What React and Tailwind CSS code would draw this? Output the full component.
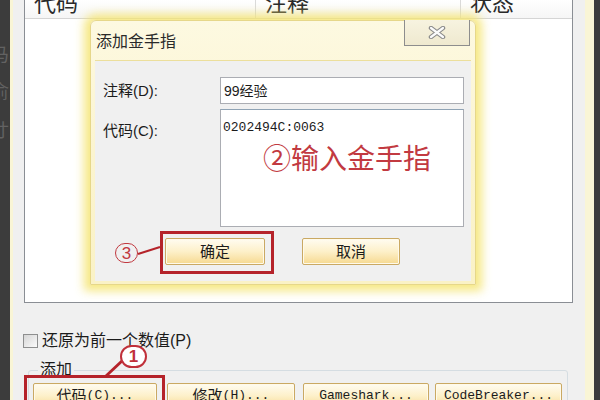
import React from 'react';

const font = "font-['Liberation_Sans','Noto_Sans_CJK_SC',sans-serif]";

function WinButton({ className = '', children }) {
  return (
    <div
      className={
        'flex items-center justify-center rounded-[2px] border border-[#caa963] bg-gradient-to-b from-[#fffcf1] via-[#fdf0c9] to-[#f6d98f] shadow-[inset_0_0_0_1px_#fffaea] text-[#1b1b1b] ' +
        className
      }
    >
      {children}
    </div>
  );
}

function Mono({ children }) {
  return <span className="font-['Liberation_Mono',monospace] text-[13px]">{children}</span>;
}

function CloseGlyph() {
  return (
    <svg width="18" height="13" viewBox="0 0 18 13">
      <path d="M3 2 L15 11 M15 2 L3 11" stroke="#8a8a8a" strokeWidth="4.5" strokeLinecap="round" fill="none" />
      <path d="M3 2 L15 11 M15 2 L3 11" stroke="#fbfbfb" strokeWidth="2.2" strokeLinecap="round" fill="none" />
    </svg>
  );
}

function AddCheatDialog() {
  return (
    <div className="absolute left-[65px] top-[20px] w-[386px] h-[265px] rounded-t-[6px] border border-[#e6d78a] bg-gradient-to-b from-[#fdf9e1] via-[#fbf4d0] to-[#faf2c6] shadow-[0_0_10px_6px_rgba(244,228,112,0.85)] flex flex-col">
      {/* title bar */}
      <div className="h-[39px] flex justify-between pl-[5px] pr-[5px]">
        <span className="self-center text-[16px] leading-[18px] text-[#2a2a2a] mt-[2px]">添加金手指</span>
        <div className="self-start w-[66px] h-[26px] -mt-px border border-t-0 border-[#8d8d8d] bg-gradient-to-b from-[#f7f3e0] to-[#efe9cf] flex items-center justify-center">
          <CloseGlyph />
        </div>
      </div>

      {/* client area */}
      <div className="relative mx-[4px] h-[221px] bg-[#f0f0f0] border-t border-[#ecdf9c] text-[#1b1b1b]">
        <div className="flex items-center mt-[16px]">
          <span className="w-[125px] pl-[8px] text-[15px] leading-[16px]">注释(D):</span>
          <div className="w-[244px] h-[27px] border border-[#abadb3] bg-white flex items-center pl-[3px] text-[14px] leading-[16px]">
            99经验
          </div>
        </div>
        <div className="flex items-start mt-[5px]">
          <span className="w-[125px] pl-[8px] mt-[14px] text-[15px] leading-[16px]">代码(C):</span>
          <div className="relative w-[244px] h-[118px] border border-[#abadb3] border-t-[#8fa3b5] bg-white pl-[2px] pt-[4px]">
            <span className="font-['Liberation_Mono',monospace] text-[13px] leading-[15px]">0202494C:0063</span>
            <span className="absolute left-[42px] top-[34px] text-[28px] leading-[32px] text-[#c23a41]">②输入金手指</span>
          </div>
        </div>
        <div className="flex mt-[11px] pl-[70px]">
          <WinButton className="w-[100px] h-[27px] text-[15px] leading-[16px]">确定</WinButton>
          <WinButton className="w-[98px] h-[27px] ml-[37px] text-[15px] leading-[16px]">取消</WinButton>
        </div>

        {/* annotation 3 */}
        <div className="absolute left-[65px] top-[170px] w-[114px] h-[43px] border-[3px] border-[#b5232a]" />
        <div className="absolute left-[20px] top-[182px] w-[23px] h-[20px] rounded-full border-[1.5px] border-[#c13940] flex items-center justify-center text-[17px] leading-[17px] text-[#c13940]">
          3
        </div>
        <svg className="absolute left-[42px] top-[184px]" width="24" height="12" viewBox="0 0 24 12">
          <path d="M1 9 L23 2" stroke="#b5232a" strokeWidth="2" fill="none" />
        </svg>
      </div>
    </div>
  );
}

export default function App() {
  return (
    <div className={'w-[600px] h-[400px] overflow-hidden flex bg-[#3c3c3c] ' + font}>
      {/* dark strip at the left with clipped glyphs */}
      <div className="w-[10px] shrink-0 overflow-hidden flex flex-col text-[18px] leading-[18px] text-[#626262]">
        <span className="-ml-[9px] mt-[46px]">马</span>
        <span className="-ml-[9px] mt-[19px]">俞</span>
        <span className="-ml-[9px] mt-[21px]">寸</span>
      </div>

      {/* window */}
      <div className="w-[584px] shrink-0 bg-[#f9f5d6] pl-[3px] pr-[9px]">
        <div className="relative h-full bg-[#f0f0f0] pl-[11px] pr-[12px]">
          {/* cheat list */}
          <div className="relative h-[303px] border-x border-b border-[#8a8e94] bg-white">
            <div className="h-[19px] flex border-b border-[#d5d5d5] bg-gradient-to-b from-white to-[#f6f6f6] overflow-hidden text-[22px] leading-[22px] text-[#2a2a2a]">
              <div className="w-[231px] border-r border-[#dadada] pl-[9px]"><span className="block -mt-[7px]">代码</span></div>
              <div className="w-[205px] border-r border-[#dadada] pl-[9px]"><span className="block -mt-[7px]">注释</span></div>
              <div className="flex-1 pl-[9px]"><span className="block -mt-[7px]">状态</span></div>
            </div>
            <AddCheatDialog />
          </div>

          {/* restore checkbox */}
          <div className="flex items-center mt-[30px] -ml-px text-[#1b1b1b]">
            <div className="w-[15px] h-[14px] border border-[#8e8f8f] bg-gradient-to-br from-[#d6d6d6] to-[#fbfbfb]" />
            <span className="ml-[4px] text-[16px] leading-[16px]">还原为前一个数值(P)</span>
          </div>

          {/* add group */}
          <fieldset className="mt-[13px] ml-[4px] w-[540px] border border-[#d5dde2] rounded-[3px] pl-[4px] pt-[5px]">
            <legend className="ml-[5px] px-[2px] text-[16px] leading-[16px] text-[#1b1b1b]">添加</legend>
            <div className="flex">
              <WinButton className="w-[124px] h-[26px] text-[15px] leading-[16px]">
                代码<Mono>(C)...</Mono>
              </WinButton>
              <WinButton className="w-[128px] h-[26px] ml-[10px] text-[15px] leading-[16px]">
                修改<Mono>(H)...</Mono>
              </WinButton>
              <WinButton className="w-[126px] h-[26px] ml-[8px] text-[15px] leading-[16px]">
                <Mono>Gameshark...</Mono>
              </WinButton>
              <WinButton className="w-[127px] h-[26px] ml-[6px] text-[15px] leading-[16px]">
                <Mono>CodeBreaker...</Mono>
              </WinButton>
            </div>
          </fieldset>

          {/* annotation 1 */}
          <div className="absolute left-[11px] top-[375px] w-[141px] h-[32px] border-[3px] border-[#b5232a]" />
          <svg className="absolute left-[90px] top-[358px]" width="22" height="20" viewBox="0 0 22 20">
            <path d="M20 2 L3 18" stroke="#b5232a" strokeWidth="3" fill="none" />
          </svg>
          <div className="absolute left-[107px] top-[345px] w-[27px] h-[23px] rounded-full border-[2.5px] border-[#c0303a] bg-white flex items-center justify-center text-[17px] leading-[17px] font-bold text-[#c0303a]">
            1
          </div>
        </div>
      </div>
      <div className="flex-1" />
    </div>
  );
}
